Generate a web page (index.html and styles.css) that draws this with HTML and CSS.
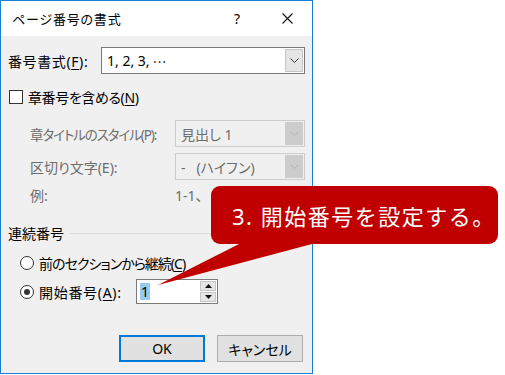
FILE: index.html
```html
<!DOCTYPE html>
<html lang="ja">
<head>
    <meta charset="UTF-8">
    <title>ページ番号の書式</title>
    <link rel="stylesheet" href="styles.css">
</head>
<body>

    <div class="dialog">
        <!-- Title bar -->
        <div class="titlebar">
            <span class="title">ページ番号の書式</span>
            <span class="tb-btn">?</span>
            <span class="tb-btn">
                <svg width="11" height="11" viewBox="0 0 11 11"><path d="M0.5 0.5 L10.5 10.5 M10.5 0.5 L0.5 10.5" stroke="#111" stroke-width="1.1"/></svg>
            </span>
        </div>

        <div class="content">
            <div class="row row-format">
                <span class="format-label">番号書式(<u>F</u>):</span>
                <div class="combo combo-format">
                    <span class="combo-text">1, 2, 3, <span class="cjk">…</span></span>
                    <span class="combo-btn"><svg width="9" height="5" viewBox="0 0 9 5"><path d="M0.5 0.5 L4.5 4.5 L8.5 0.5" fill="none" stroke="#333" stroke-width="1"/></svg></span>
                </div>
            </div>

            <div class="row row-check">
                <span class="checkbox"></span>
                <span class="check-label">章番号を含める(<u>N</u>)</span>
            </div>

            <div class="row row-sub row-style disabled">
                <span class="sub-label style-label">章タイトルのスタイル(P):</span>
                <div class="combo combo-off">
                    <span class="combo-text">見出し 1</span>
                    <span class="combo-btn"><svg width="9" height="5" viewBox="0 0 9 5"><path d="M0.5 0.5 L4.5 4.5 L8.5 0.5" fill="none" stroke="#b4b4b4" stroke-width="1"/></svg></span>
                </div>
            </div>

            <div class="row row-sub row-sep disabled">
                <span class="sub-label">区切り文字(E):</span>
                <div class="combo combo-off">
                    <span class="combo-text">-&nbsp;&nbsp;&nbsp;(ハイフン)</span>
                    <span class="combo-btn"><svg width="9" height="5" viewBox="0 0 9 5"><path d="M0.5 0.5 L4.5 4.5 L8.5 0.5" fill="none" stroke="#b4b4b4" stroke-width="1"/></svg></span>
                </div>
            </div>

            <div class="row row-sub row-example disabled">
                <span class="sub-label">例:</span>
                <span>1-1、</span>
            </div>

            <div class="group-head">
                <span>連続番号</span>
                <span class="group-line"></span>
            </div>

            <div class="row row-radio row-continue">
                <span class="radio"></span>
                <span class="tight">前のセクションから継続(<u>C</u>)</span>
            </div>

            <div class="row row-radio row-start">
                <span class="radio checked"></span>
                <span class="start-label">開始番号(<u>A</u>):</span>
                <div class="spin">
                    <span class="spin-text"><span class="selected">1</span></span>
                    <span class="spin-btns">
                        <span class="spin-btn"><svg width="7" height="4" viewBox="0 0 7 4"><path d="M0 4 L3.5 0 L7 4 Z" fill="#111"/></svg></span>
                        <span class="spin-btn"><svg width="7" height="4" viewBox="0 0 7 4"><path d="M0 0 L3.5 4 L7 0 Z" fill="#111"/></svg></span>
                    </span>
                </div>
            </div>

            <div class="buttons">
                <button class="btn btn-default">OK</button>
                <button class="btn">キャンセル</button>
            </div>
        </div>
    </div>

    <!-- Callout -->
    <svg class="callout-tail" width="190" height="70" viewBox="150 230 190 70">
        <polygon points="158,285 247,240 327,240" fill="#c00000"/>
    </svg>
    <div class="callout">3. 開始番号を設定する。</div>

</body>
</html>
```

FILE: styles.css
```css
body {
    margin: 0;
    background-color: #fff;
    color: #000;
    font-family: "Noto Sans", "Noto Sans CJK JP", sans-serif;
    font-size: 14px;
    font-feature-settings: "palt";
    position: relative;
    width: 505px;
    height: 375px;
    overflow: hidden;
    white-space: nowrap;
}

u {
    text-decoration-thickness: 1px;
    text-underline-offset: 2px;
}

.cjk {
    font-family: "Noto Sans CJK JP", sans-serif;
}

.tight {
    letter-spacing: -1px;
}

/* Dialog frame */
.dialog {
    width: 311px;
    height: 372px;
    border: 1px solid #1a7fd4;
    background-color: #f0f0f0;
}

.titlebar {
    height: 35px;
    background-color: #fff;
    display: flex;
    align-items: center;
    padding-left: 11px;
}

.title {
    font-size: 13px;
    letter-spacing: 0.8px;
    flex: 1;
}

.tb-btn {
    width: 50px;
    display: flex;
    justify-content: center;
    align-items: center;
    font-size: 14px;
}

.content {
    padding: 11px 7px 0 7px;
}

.row {
    display: flex;
    align-items: center;
}

/* Number format */
.row-format {
    height: 27px;
}

.format-label {
    width: 93px;
    letter-spacing: 0.6px;
}

.combo {
    box-sizing: border-box;
    height: 27px;
    border: 1px solid #7a7a7a;
    background-color: #fff;
    display: flex;
    align-items: stretch;
}

.combo-format {
    width: 204px;
}

.combo-text {
    flex: 1;
    display: flex;
    align-items: center;
    gap: 3px;
    padding-left: 5px;
    letter-spacing: 0;
}

.combo-btn {
    width: 18px;
    margin: 1px;
    background-color: #e5e5e5;
    border: 1px solid #c6c6c6;
    box-sizing: border-box;
    display: flex;
    justify-content: center;
    align-items: center;
}

.combo-off {
    width: 130px;
    border-color: #cccccc;
    background-color: #f0f0f0;
}

.combo-off .combo-btn {
    background-color: #cccccc;
    border-color: #cccccc;
}

/* Chapter number */
.row-check {
    height: 20px;
    margin-top: 13px;
}

.checkbox {
    box-sizing: border-box;
    width: 14px;
    height: 14px;
    border: 1px solid #333;
    background-color: #fff;
    margin-left: 1px;
    margin-right: 5px;
}

.check-label {
    letter-spacing: -0.4px;
}

.row-sub {
    padding-left: 22px;
}

.sub-label {
    width: 145px;
}

.style-label {
    font-size: 13.5px;
    letter-spacing: -1.1px;
}

.disabled {
    color: #6d6d6d;
}

.row-style {
    height: 27px;
    margin-top: 13px;
}

.row-sep {
    height: 27px;
    margin-top: 6px;
}

.row-example {
    height: 16px;
    margin-top: 7px;
}

/* Page numbering group */
.group-head {
    display: flex;
    align-items: center;
    height: 18px;
    margin-top: 21px;
}

.group-line {
    flex: 1;
    height: 1px;
    background-color: #dcdcdc;
    margin-left: 6px;
}

.row-radio {
    padding-left: 12px;
}

.row-continue {
    height: 20px;
    margin-top: 11px;
}

.row-start {
    height: 25px;
    margin-top: 6px;
}

.radio {
    box-sizing: border-box;
    width: 14px;
    height: 14px;
    border: 1px solid #333;
    border-radius: 50%;
    background-color: #fff;
    margin-right: 5px;
    display: flex;
    justify-content: center;
    align-items: center;
}

.radio.checked::after {
    content: "";
    width: 6px;
    height: 6px;
    border-radius: 50%;
    background-color: #333;
}

.start-label {
    width: 97px;
    letter-spacing: 0.7px;
}

.spin {
    box-sizing: border-box;
    width: 82px;
    height: 25px;
    border: 1px solid #7a7a7a;
    background-color: #fff;
    display: flex;
}

.spin-text {
    flex: 1;
    display: flex;
    align-items: center;
    padding-left: 3px;
}

.selected {
    background-color: #99c9ef;
    color: #000;
    padding: 0 1px;
    line-height: 17px;
}

.spin-btns {
    display: flex;
    flex-direction: column;
    gap: 1px;
    padding: 1px;
}

.spin-btn {
    box-sizing: border-box;
    width: 16px;
    flex: 1;
    background-color: #e5e5e5;
    border: 1px solid #c6c6c6;
    display: flex;
    justify-content: center;
    align-items: center;
}

/* OK / Cancel */
.buttons {
    display: flex;
    justify-content: flex-end;
    gap: 12px;
    margin-top: 31px;
    padding-right: 2px;
}

.btn {
    box-sizing: border-box;
    width: 86px;
    height: 27px;
    font-family: inherit;
    font-size: 14px;
    font-feature-settings: "palt";
    color: #000;
    background-color: #e1e1e1;
    border: 1px solid #adadad;
    padding: 0;
}

.btn-default {
    border: 2px solid #0078d7;
}

/* Callout bubble */
.callout {
    position: absolute;
    left: 211px;
    top: 186px;
    width: 287px;
    height: 58px;
    box-sizing: border-box;
    padding-left: 21px;
    background-color: #c00000;
    border-radius: 9px;
    color: #fff;
    font-size: 22px;
    font-feature-settings: normal;
    letter-spacing: 1.5px;
    display: flex;
    align-items: center;
}

.callout-tail {
    position: absolute;
    left: 150px;
    top: 230px;
    width: 190px;
    height: 70px;
}
```
